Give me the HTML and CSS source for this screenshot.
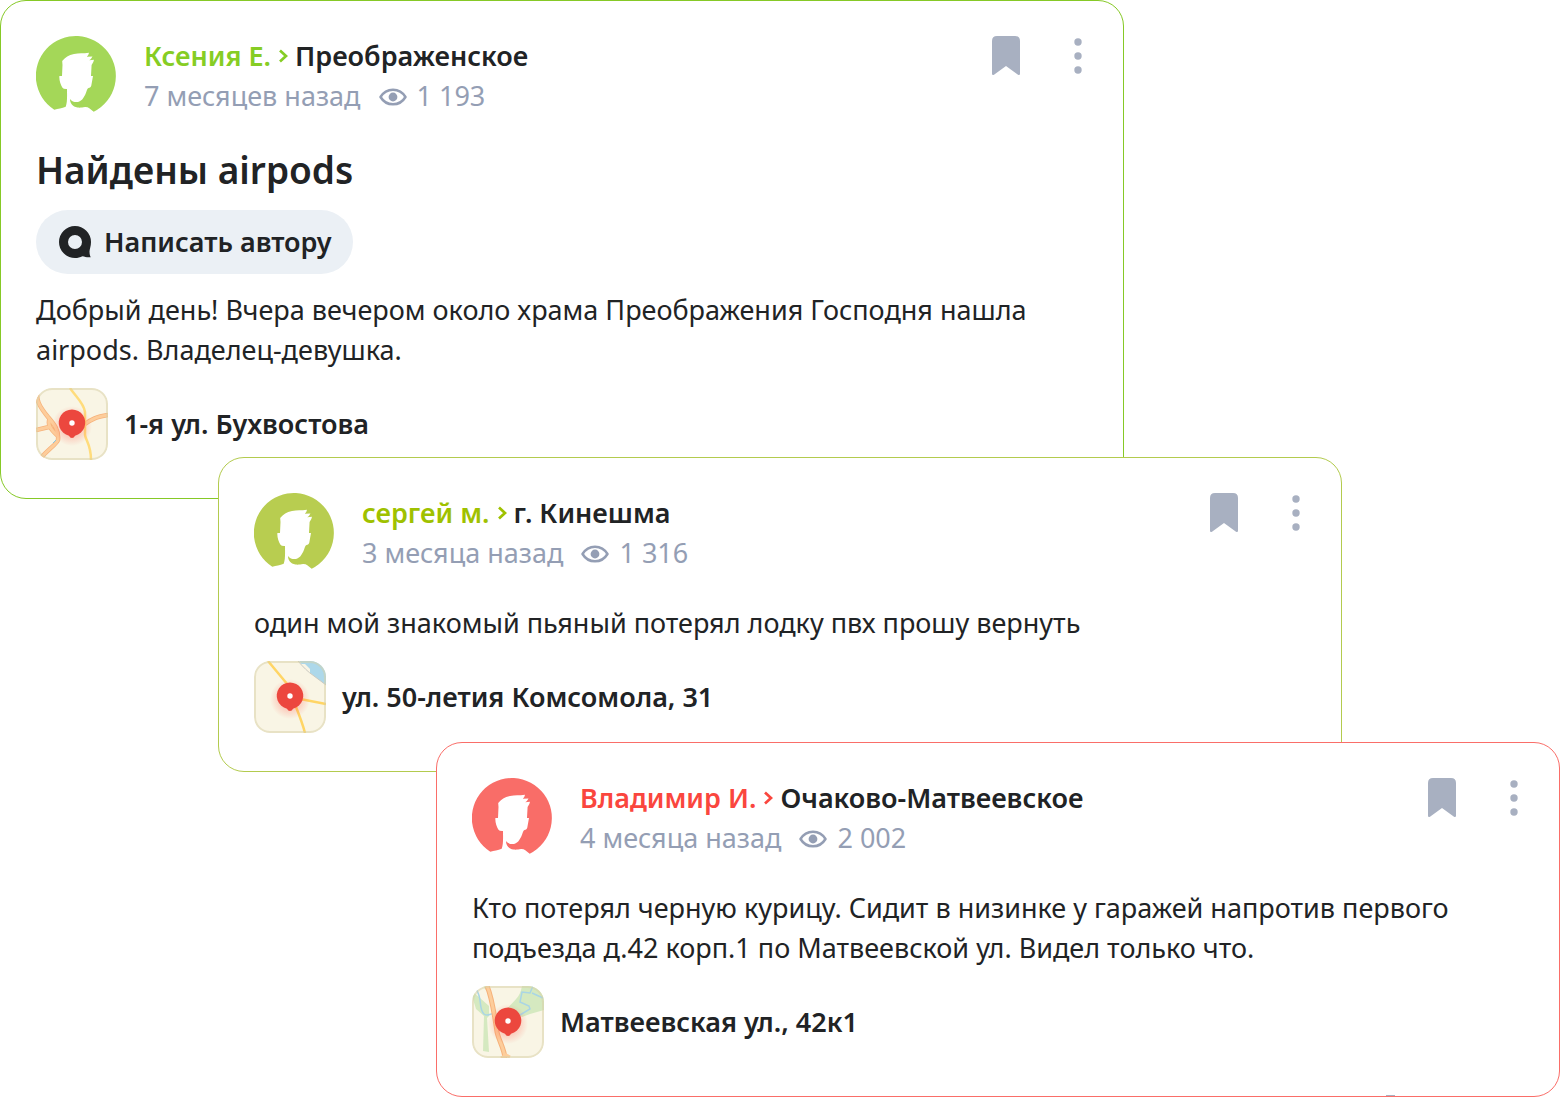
FILE: index.html
```html
<!DOCTYPE html>
<html lang="ru">
<head>
    <meta charset="UTF-8">
    <meta name="viewport" content="width=device-width, initial-scale=1.0">
    <title>Находки и потери</title>
    <link rel="stylesheet" href="styles.css">
</head>
<body>

    <svg width="0" height="0" class="sprite" aria-hidden="true">
        <symbol id="avatar" viewBox="0 0 80 80">
            <path d="M18.3 73.7A40 40 0 1 1 57.7 75.8L53.3 72.3Q51.500 70.800 49 71C46 71.300 44.500 71.900 41.500 71.500C36.500 70.800 34 67 34 63C36 65.700 39 66.300 41.500 66C45.500 65.500 47.500 62 49.300 58.500C50.700 55.500 51 52.500 52.500 52C54 52 55 51 55.300 49.500L57 40H55L55.600 29Q57.600 26.500 58 23.700L53.300 24.300Q55.500 22.700 56.500 20.500L50.800 20.800Q52.700 19 53 16.700C47 17.600 43 17 38 18C32.500 19 29.500 21.500 26.200 25L26.500 29L26 40H23.400C23 44 24.500 48.500 26.300 51.500Q27.500 53.300 31 53C31 59 31.500 66 29.700 70.700C26 72.500 22 72.300 18.300 73.700Z" fill="currentColor"/>
        </symbol>
        <symbol id="chevron" viewBox="0 0 12 16">
            <path d="M3 2.500L9 8L3 13.500" fill="none" stroke="currentColor" stroke-width="2.700"/>
        </symbol>
        <symbol id="eye" viewBox="0 0 28 20">
            <path d="M1.500 11C4.500 6 9 3.700 14 3.700S23.500 6 26.500 11C23.500 16 19 18.300 14 18.300S4.500 16 1.500 11Z" fill="none" stroke="currentColor" stroke-width="2.500" stroke-linejoin="round"/>
            <circle cx="14" cy="11" r="4.400" fill="currentColor"/>
        </symbol>
        <symbol id="bookmark" viewBox="0 0 28 40">
            <path d="M5 0H23Q28 0 28 5V37.500Q28 39.800 26 38.800L14 30L2 38.800Q0 39.800 0 37.500V5Q0 0 5 0Z" fill="currentColor"/>
        </symbol>
        <symbol id="dots" viewBox="0 0 8 40">
            <circle cx="4" cy="6" r="3.700" fill="currentColor"/>
            <circle cx="4" cy="20" r="3.700" fill="currentColor"/>
            <circle cx="4" cy="34" r="3.700" fill="currentColor"/>
        </symbol>
        <symbol id="chat" viewBox="0 0 32 32">
            <path fill-rule="evenodd" d="M16 0A16 16 0 0 1 32 16C32 20 30.500 23.500 30.500 25.500C30.500 28 31 30 31.700 31.200C28 31.700 26 30.700 23.500 30.200C21 31.300 19 32 16 32A16 16 0 0 1 16 0ZM16 9A7 7 0 1 0 16 23A7 7 0 1 0 16 9Z" fill="currentColor"/>
        </symbol>
        <symbol id="pin" viewBox="0 0 72 72">
            <rect x="1" y="1" width="70" height="70" rx="15" fill="none" stroke="#d8cfa5" stroke-opacity="0.5" stroke-width="2"/>
            <circle cx="36" cy="38" r="20" fill="url(#glow)"/>
            <path d="M36 50Q34 50 33 47.700A13.300 13.300 0 1 1 39 47.700Q38 50 36 50Z" fill="#ec473e"/>
            <circle cx="36" cy="35" r="2.700" fill="#fff"/>
        </symbol>
        <radialGradient id="glow">
            <stop offset="40%" stop-color="#ff5040" stop-opacity="0.3"/>
            <stop offset="100%" stop-color="#ff5040" stop-opacity="0"/>
        </radialGradient>
    </svg>

    <main class="feed">

        <article class="card card-green">
            <header class="card-header">
                <svg class="avatar"><use href="#avatar"/></svg>
                <div class="info">
                    <div class="author">
                        <a href="#" class="name">Ксения Е.</a>
                        <svg class="chevron"><use href="#chevron"/></svg>
                        <a href="#" class="place">Преображенское</a>
                    </div>
                    <div class="meta">
                        <span>7 месяцев назад</span>
                        <svg class="eye"><use href="#eye"/></svg>
                        <span>1 193</span>
                    </div>
                </div>
                <div class="actions">
                    <button class="icon-button" aria-label="Сохранить"><svg class="bookmark"><use href="#bookmark"/></svg></button>
                    <button class="icon-button" aria-label="Ещё"><svg class="dots"><use href="#dots"/></svg></button>
                </div>
            </header>
            <h2 class="title">Найдены airpods</h2>
            <button class="write-button">
                <svg class="chat"><use href="#chat"/></svg>
                Написать автору
            </button>
            <p class="text">Добрый день! Вчера вечером около храма Преображения Господня нашла airpods. Владелец-девушка.</p>
            <a href="#" class="location">
                <svg class="map" viewBox="0 0 72 72">
                    <g fill="none" stroke="#f6b27b" stroke-width="4.500">
                        <path d="M2 0C-1 11 3 18 12 29C18 36 23 42 22 52C20 57 13 60 4 71M0 42L13 39M14 30C11 36 14 41 22 48M49 36C56 31 60 29 72 27"/>
                        <path d="M2 0C-1 11 3 18 12 29C18 36 23 42 22 52C20 57 13 60 4 71M0 42L13 39M14 30C11 36 14 41 22 48M49 36C56 31 60 29 72 27" stroke="#fdcd9b" stroke-width="3"/>
                    </g>
                    <path d="M34 0C40 9 48 15 49 24V47C50 53 55 57 55 72" fill="none" stroke="#ffdc7c" stroke-width="2.500"/>
                    <path d="M17 55L20 52" stroke="#8cc5df" stroke-width="1"/>
                    <use href="#pin"/>
                </svg>
                <span>1-я ул. Бухвостова</span>
            </a>
        </article>

        <article class="card card-olive">
            <header class="card-header">
                <svg class="avatar"><use href="#avatar"/></svg>
                <div class="info">
                    <div class="author">
                        <a href="#" class="name">сергей м.</a>
                        <svg class="chevron"><use href="#chevron"/></svg>
                        <a href="#" class="place">г. Кинешма</a>
                    </div>
                    <div class="meta">
                        <span>3 месяца назад</span>
                        <svg class="eye"><use href="#eye"/></svg>
                        <span>1 316</span>
                    </div>
                </div>
                <div class="actions">
                    <button class="icon-button" aria-label="Сохранить"><svg class="bookmark"><use href="#bookmark"/></svg></button>
                    <button class="icon-button" aria-label="Ещё"><svg class="dots"><use href="#dots"/></svg></button>
                </div>
            </header>
            <p class="text">один мой знакомый пьяный потерял лодку пвх прошу вернуть</p>
            <a href="#" class="location">
                <svg class="map" viewBox="0 0 72 72">
                    <path d="M45 0H72V24L60 15C53 10 49 5 45 0Z" fill="#add8ea"/>
                    <path d="M47 3L56 13V8L51 3Z" fill="#f9f5e5"/>
                    <path d="M44 0C49 6 54 11 60 15L72 24" fill="none" stroke="#cbc9c0" stroke-width="1"/>
                    <path d="M14 0L34 24M36 36L72 43M42 46C46 56 49 64 51 72" fill="none" stroke="#ffd565" stroke-width="2.500"/>
                    <use href="#pin"/>
                </svg>
                <span>ул. 50-летия Комсомола, 31</span>
            </a>
        </article>

        <article class="card card-red">
            <header class="card-header">
                <svg class="avatar"><use href="#avatar"/></svg>
                <div class="info">
                    <div class="author">
                        <a href="#" class="name">Владимир И.</a>
                        <svg class="chevron"><use href="#chevron"/></svg>
                        <a href="#" class="place">Очаково-Матвеевское</a>
                    </div>
                    <div class="meta">
                        <span>4 месяца назад</span>
                        <svg class="eye"><use href="#eye"/></svg>
                        <span>2 002</span>
                    </div>
                </div>
                <div class="actions">
                    <button class="icon-button" aria-label="Сохранить"><svg class="bookmark"><use href="#bookmark"/></svg></button>
                    <button class="icon-button" aria-label="Ещё"><svg class="dots"><use href="#dots"/></svg></button>
                </div>
            </header>
            <p class="text">Кто потерял черную курицу. Сидит в низинке у гаражей напротив первого подъезда д.42 корп.1 по Матвеевской ул. Видел только что.</p>
            <a href="#" class="location">
                <svg class="map" viewBox="0 0 72 72">
                    <path d="M0 5L8 12L17 20L17 30L15 32L17 66L11 65L12 30L4 23L0 10ZM11 0L18 10L15 0ZM50 0H72V24L58 28L50 31L36 22C42 14 48 12 50 0Z" fill="#d5e9c0"/>
                    <path d="M4 3C11 13 6 22 12 28C16 31 18 27 22 28M61 0L58 7L50 6L48 16L57 20L58 23L48 29M60 7L71 12" fill="none" stroke="#a9d5e5" stroke-width="1.500"/>
                    <path d="M15 0C20 11 23 32 25 46C27 55 32 62 33 72" fill="none" stroke="#f6b27b" stroke-width="5"/>
                    <path d="M15 0C20 11 23 32 25 46C27 55 32 62 33 72M29 72L34 69L38 71" fill="none" stroke="#fdcd9b" stroke-width="3"/>
                    <use href="#pin"/>
                </svg>
                <span>Матвеевская ул., 42к1</span>
            </a>
        </article>

    </main>

</body>
</html>
```
FILE: styles.css
```css
* {
    box-sizing: border-box;
}

body {
    margin: 0;
    background: #fff;
    color: #212325;
    font-family: 'Noto Sans', 'Open Sans', sans-serif;
    font-size: 27px;
    line-height: 40px;
}

a {
    color: inherit;
    text-decoration: none;
}

button {
    border: none;
    padding: 0;
    font: inherit;
    color: inherit;
    cursor: pointer;
}

svg {
    display: block;
    flex-shrink: 0;
}

.sprite {
    position: absolute;
}

.feed {
    display: flex;
    flex-direction: column;
}

/* every next card goes over the corner of the previous one */
.card {
    position: relative;
    width: calc(100% - 436px);
    padding: 35px 35px 38px;
    background: #fff;
    border: 1px solid;
    border-radius: 26px;
}

.card-green {
    border-color: #86c926;
}

.card-olive {
    margin: -42px 0 0 218px;
    border-color: #b3cb4e;
}

.card-red {
    margin: -30px 0 0 436px;
    border-color: #fa6e69;
}

.card-red::after {
    content: '';
    position: absolute;
    right: 164px;
    bottom: 0;
    width: 9px;
    height: 1px;
    background: #a9b1c1;
}

.card-header {
    display: flex;
    margin-bottom: 30px;
}

.avatar {
    width: 80px;
    height: 80px;
    margin-right: 28px;
}

.card-green .avatar {
    color: #a4d758;
}

.card-olive .avatar {
    color: #b8cd50;
}

.card-red .avatar {
    color: #f96d68;
}

.info {
    flex: 1;
}

.author {
    display: flex;
    align-items: center;
    font-weight: 600;
    gap: 6px;
}

.chevron {
    width: 12px;
    height: 16px;
}

.card-green .name,
.card-green .chevron {
    color: #86cd24;
}

.card-olive .name,
.card-olive .chevron {
    color: #9fc100;
}

.card-red .name,
.card-red .chevron {
    color: #fa463e;
}

.meta {
    display: flex;
    align-items: center;
    gap: 10px;
    color: #949eb4;
}

.eye {
    width: 28px;
    height: 20px;
    margin-left: 8px;
}

.actions {
    display: flex;
    align-items: flex-start;
    gap: 54px;
    margin-right: 6px;
}

.icon-button {
    background: none;
    color: #a8b0c1;
}

.bookmark {
    width: 28px;
    height: 40px;
}

.dots {
    width: 8px;
    height: 40px;
}

.title {
    margin: 0 0 16px;
    font-size: 37px;
    line-height: 48px;
    font-weight: 600;
}

.write-button {
    display: flex;
    align-items: center;
    gap: 13px;
    height: 64px;
    padding: 0 22px 0 23px;
    margin-bottom: 16px;
    border-radius: 32px;
    background: #ebf0f5;
    font-weight: 600;
}

.chat {
    width: 32px;
    height: 32px;
}

.text {
    margin: 0 0 18px;
}

.location {
    display: flex;
    align-items: center;
    gap: 16px;
    font-weight: 600;
}

.map {
    width: 72px;
    height: 72px;
    border-radius: 16px;
    background: #f9f5e5;
}
```
